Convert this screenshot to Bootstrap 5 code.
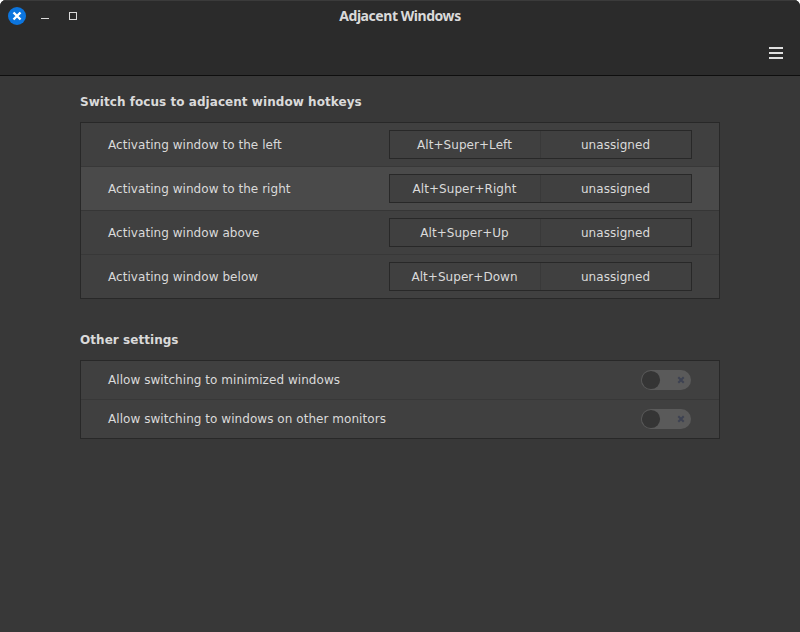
<!DOCTYPE html>
<html lang="en" data-bs-theme="dark">
<head>
<meta charset="utf-8">
<meta name="viewport" content="width=device-width, initial-scale=1">
<title>Adjacent Windows</title>
<link href="https://cdn.jsdelivr.net/npm/bootstrap@5.3.0/dist/css/bootstrap.min.css" rel="stylesheet">
<style>
  html { background: #fff; }
  body { height: 632px; background: #fff; color: #dadada; font: 12px/18px "DejaVu Sans", sans-serif; letter-spacing: .05px; }
  .app-window { height: 632px; background: #383838; border-radius: 6px 6px 0 0; }
  .title-area { height: 76px; background: #2b2b2b; border-bottom: 1px solid #0e0e0e; box-shadow: inset 0 1px #3b3b3b; }
  .title-strip { height: 32px; padding: 0 8px; }
  .title-side { width: 72px; }
  .window-title { font: bold 14px/18px "Noto Sans", sans-serif; letter-spacing: -.45px; color: #dadada; }
  .tool-strip { height: 43px; padding-right: 17px; }
  .section-title { font-size: 12px; line-height: 18px; font-weight: bold; color: #dadada; margin: 0 0 11px; }
  .settings-body { width: 640px; padding-top: 17px; }
  .settings-list { --bs-list-group-bg: #404040; --bs-list-group-color: #dadada; --bs-list-group-border-color: #282828; --bs-list-group-border-radius: 0; border: 1px solid #282828; }
  .settings-list .list-group-item { border: 0; padding: 0 27px; height: 44px; border-bottom: 1px solid #383838; }
  .settings-list .list-group-item:last-child { border-bottom: 0; height: 43px; }
  .settings-list .list-group-item.hovered { background: #4a4a4a; border-bottom-color: #363636; }
  .settings-list.switches .list-group-item { height: 39px; padding-right: 28px; }
  .settings-list.switches .list-group-item:last-child { height: 38px; }
  .key-pair { width: 303px; height: 29px; border: 1px solid #282828; background: #404040; line-height: 26px; }
  .key-pair > span { padding: 1px 1px 0 0; }
  .key-pair > :first-child { border-right: 1px solid #393939; width: 151px; }
  .key-pair > :last-child { width: 150px; }
  .section-gap { margin-top: 32px; }
</style>
<script src="https://cdn.jsdelivr.net/npm/bootstrap@5.3.0/dist/js/bootstrap.bundle.min.js"></script>
</head>
<body class="overflow-hidden">
<div class="app-window overflow-hidden">
  <header class="title-area">
    <div class="title-strip d-flex align-items-center justify-content-between">
      <svg class="title-side" width="72" height="32" viewBox="8 0 72 32" role="img" aria-label="Window controls">
        <circle cx="17" cy="16" r="9" fill="#0c75de"/>
        <path d="M13.5 12.5l7 7M20.5 12.5l-7 7" stroke="#fff" stroke-width="2.4"/>
        <path d="M41 18.5h8" stroke="#dadada"/>
        <rect x="69.5" y="12.5" width="7" height="7" fill="none" stroke="#dadada"/>
      </svg>
      <div class="window-title">Adjacent Windows</div>
      <div class="title-side"></div>
    </div>
    <div class="tool-strip d-flex justify-content-end">
      <svg width="14" height="43" viewBox="0 0 14 43" role="img" aria-label="Menu">
        <path d="M0 16h14M0 21h14M0 26h14" stroke="#dfdfdf" stroke-width="2"/>
      </svg>
    </div>
  </header>

  <main class="settings-body mx-auto">
    <h2 class="section-title">Switch focus to adjacent window hotkeys</h2>
    <ul class="list-group settings-list">
      <li class="list-group-item d-flex align-items-center justify-content-between">
        <span>Activating window to the left</span>
        <div class="key-pair d-flex text-center"><span>Alt+Super+Left</span><span>unassigned</span></div>
      </li>
      <li class="list-group-item hovered d-flex align-items-center justify-content-between">
        <span>Activating window to the right</span>
        <div class="key-pair d-flex text-center"><span>Alt+Super+Right</span><span>unassigned</span></div>
      </li>
      <li class="list-group-item d-flex align-items-center justify-content-between">
        <span>Activating window above</span>
        <div class="key-pair d-flex text-center"><span>Alt+Super+Up</span><span>unassigned</span></div>
      </li>
      <li class="list-group-item d-flex align-items-center justify-content-between">
        <span>Activating window below</span>
        <div class="key-pair d-flex text-center"><span>Alt+Super+Down</span><span>unassigned</span></div>
      </li>
    </ul>

    <h2 class="section-title section-gap">Other settings</h2>
    <ul class="list-group settings-list switches">
      <li class="list-group-item d-flex align-items-center justify-content-between">
        <span>Allow switching to minimized windows</span>
        <svg width="50" height="20" viewBox="0 0 50 20" role="img" aria-label="Off">
          <rect width="50" height="20" rx="10" fill="#5a5a5a"/>
          <circle cx="10" cy="10" r="9.1" fill="#353535"/>
          <path d="M37.3 7.3l5.4 5.4M42.7 7.3l-5.4 5.4" stroke="#3d4252" stroke-width="2"/>
        </svg>
      </li>
      <li class="list-group-item d-flex align-items-center justify-content-between">
        <span>Allow switching to windows on other monitors</span>
        <svg width="50" height="20" viewBox="0 0 50 20" role="img" aria-label="Off">
          <rect width="50" height="20" rx="10" fill="#5a5a5a"/>
          <circle cx="10" cy="10" r="9.1" fill="#353535"/>
          <path d="M37.3 7.3l5.4 5.4M42.7 7.3l-5.4 5.4" stroke="#3d4252" stroke-width="2"/>
        </svg>
      </li>
    </ul>
  </main>
</div>
</body>
</html>
